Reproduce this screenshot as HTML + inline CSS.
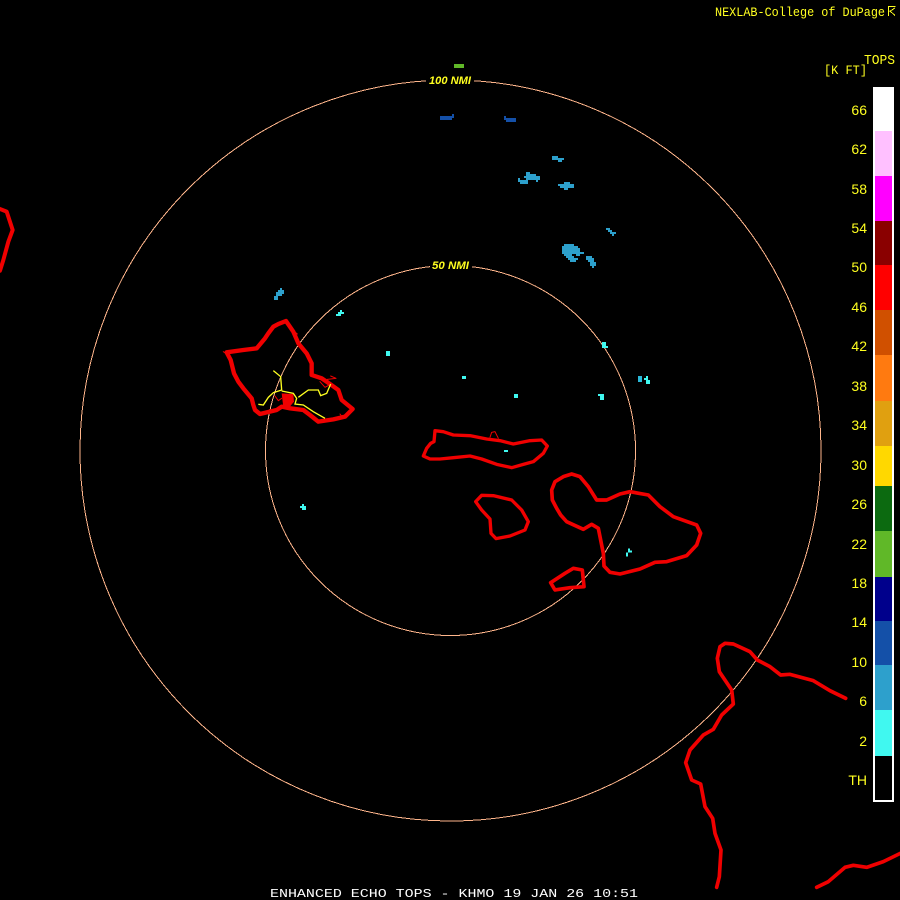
<!DOCTYPE html>
<html>
<head>
<meta charset="utf-8">
<style>
html,body{margin:0;padding:0;background:#000;width:900px;height:900px;overflow:hidden}
svg{display:block}
text{font-family:"Liberation Mono","DejaVu Sans Mono",monospace}
.lab text{font-family:"Liberation Sans",sans-serif;font-size:14px;fill:#ffff20}
.coast{fill:none;stroke:#f00000;stroke-linejoin:round;stroke-linecap:round}
</style>
</head>
<body>
<svg width="900" height="900" viewBox="0 0 900 900" xmlns="http://www.w3.org/2000/svg">
<rect width="900" height="900" fill="#000"/>

<!-- range rings -->
<g fill="none" stroke="#ffb68c" stroke-width="1" shape-rendering="crispEdges">
<circle cx="450.5" cy="450.5" r="370.5"/>
<circle cx="450.5" cy="450.5" r="185"/>
</g>
<rect x="426" y="74" width="48" height="13" fill="#000"/>
<rect x="430" y="259" width="42" height="13" fill="#000"/>
<text x="429" y="84" font-size="11" font-weight="bold" font-style="italic" fill="#ffff20" textLength="42" lengthAdjust="spacingAndGlyphs" style="font-family:'Liberation Sans',sans-serif">100 NMI</text>
<text x="432" y="269" font-size="11" font-weight="bold" font-style="italic" fill="#ffff20" textLength="37" lengthAdjust="spacingAndGlyphs" style="font-family:'Liberation Sans',sans-serif">50 NMI</text>

<!-- echoes -->
<g shape-rendering="crispEdges">
<rect x="454" y="64" width="10" height="4" fill="#60b828"/>
<g transform="translate(430 50) scale(.33333)" fill="#1450a8">
<path d="M30 198h36v-6h6v12h-6v6h-36z"/>
<path d="M222 198h6v6h30v12h-30v-6h-6z"/>
</g>
<g transform="translate(430 50) scale(.33333)" fill="#2da0cc">
<path d="M366 318h18v6h18v6h-6v6h-12v-6h-18z"/>
<path d="M288 366h12v6h18v6h12v12h-6v6h-6v-6h-24v12h-24v-6h-6v-12h6v6h18v-6h-6v-6h6z"/>
<path d="M402 396h18v6h12v12h-18v6h-12v-6h-12v-6h-6v-6h18z"/>
</g>
<g transform="translate(550 220) scale(.33333)" fill="#2da0cc">
<path d="M168 24h12v6h6v6h12v6h-6v6h-6v-6h-6v-6h-6v-6h-6z"/>
<path d="M60 72h12v6h12v6h6v12h12v6h-12v6h-6v12h-6v6h-18v-6h-6v-6h-6v-6h-6v-6h-6v-24h6v-6h6z M66 102v6h6v6h12v-6h-6v-6z" fill-rule="evenodd"/>
<path d="M108 108h18v6h6v12h6v12h-6v6h-6v-6h-6v-12h-6v-6h-6z"/>
</g>
<g transform="translate(550 220) scale(.33333)" fill="#40f8f0">
<path d="M156 366h12v12h6v6h-18z"/>
<path d="M144 522h18v18h-12v-12h-6z"/>
<path d="M288 468h6v12h6v12h-12v-12h-6v-6h6z"/>
</g>
<rect x="638" y="376" width="4" height="6" fill="#2ab8d8"/>
<g transform="translate(255 280) scale(.33333)" fill="#2da0cc">
<path d="M75 24h6v6h6v12h-6v6h-12v12h-12v-12h6v-12h6v-6h6z"/>
</g>
<g transform="translate(255 280) scale(.33333)" fill="#40f8f0">
<path d="M255 90h6v6h6v6h-9v6h-15v-6h6v-6h6z"/>
</g>
<g fill="#40f8f0">
<rect x="386" y="351" width="4" height="5"/>
<rect x="462" y="376" width="4" height="3"/>
<rect x="514" y="394" width="4" height="4"/>
<rect x="504" y="450" width="4" height="2"/>
<path d="M302 504h2v2h2v4h-4v-2h-2v-2h2z"/>
</g>
<g transform="translate(540 465) scale(.33333)" fill="#40f8f0">
<path d="M264 250h6v6h6v6h-12v12h-6v-12h6z"/>
</g>
</g>

<!-- Oahu -->
<g transform="translate(210 310) scale(.33333)">
<path class="coast" stroke-width="13" d="M228 33L205 42L190 50L175 70L165 85L140 115L100 120L50 127L62 150L72 190L85 215L100 235L125 265L130 285L135 300L150 312L200 300L215 290L240 295L280 300L300 315L325 335L370 328L405 320L428 297L395 270L385 240L360 222L335 205L305 195L305 160L290 130L265 100L250 65Z"/>
<path d="M215 250L250 252L252 275L238 292L220 292Z" fill="#f00000"/>
<path class="coast" stroke-width="3" d="M330 215L345 232L358 225L352 208L378 205L362 198M195 258L205 272L215 265M40 125L50 132M250 62L262 72M390 312L400 325"/>
<g fill="none" stroke="#ffff20" stroke-width="4">
<path d="M190 182L212 200L215 240L190 248L175 262L160 285L145 283"/>
<path d="M215 243L250 250L260 265L255 282L280 285L310 305L345 325"/>
<path d="M265 262L295 240L325 240L332 257L350 250L362 222"/>
</g>
</g>

<!-- Molokai, Lanai -->
<g transform="translate(410 420) scale(.33333)">
<path class="coast" stroke-width="10" d="M75 32L100 35L130 45L180 47L230 57L270 62L310 72L360 62L395 60L412 78L400 100L370 125L340 133L305 143L260 133L215 117L180 108L130 113L90 117L60 117L40 108L50 85L62 70L72 65Z"/>
<path class="coast" stroke-width="3" d="M240 52L245 37L255 35L265 55"/>
<path class="coast" stroke-width="10" d="M215 226L250 227L305 240L335 270L355 305L345 330L300 348L258 356L243 340L240 297L215 270L197 245Z"/>
</g>

<!-- Maui, Kahoolawe -->
<g transform="translate(540 465) scale(.33333)">
<path class="coast" stroke-width="11" d="M95 27L120 35L145 65L170 105L200 105L240 87L270 80L325 90L360 125L400 155L470 180L482 205L470 240L440 272L380 290L345 292L300 312L240 327L210 322L192 303L190 265L175 190L155 178L130 193L80 170L62 150L50 130L37 105L35 75L45 50L70 35Z"/>
<path class="coast" stroke-width="11" d="M100 310L127 315L132 365L90 368L45 375L32 353L75 325Z"/>
</g>

<!-- Big Island -->
<g transform="translate(670 630) scale(.33333)">
<path class="coast" stroke-width="11" d="M527 205L480 182L430 152L360 133L332 135L300 110L262 90L240 65L190 42L165 40L150 50L142 85L148 125L185 180L190 222L155 255L130 298L100 315L60 360L47 398L65 450L92 462L105 530L128 565L135 610L153 660L148 740L140 772"/>
<path class="coast" stroke-width="11" d="M440 772L475 755L525 712L550 706L590 712L640 695L695 668"/>
</g>

<!-- Kauai edge -->
<g transform="translate(0 200) scale(.33333)">
<path class="coast" stroke-width="12" d="M-5 25L20 35L38 90L25 125L10 180L0 212"/>
</g>

<!-- color bar -->
<g shape-rendering="crispEdges">
<rect x="873" y="87" width="21" height="715" fill="#fff"/>
<rect x="875" y="89" width="17" height="711" fill="#000"/>
<rect x="875" y="89" width="17" height="42" fill="#fff"/>
<rect x="875" y="131" width="17" height="45" fill="#ffc0ff"/>
<rect x="875" y="176" width="17" height="45" fill="#ff00ff"/>
<rect x="875" y="221" width="17" height="44" fill="#8a0000"/>
<rect x="875" y="265" width="17" height="45" fill="#ff0000"/>
<rect x="875" y="310" width="17" height="45" fill="#d05000"/>
<rect x="875" y="355" width="17" height="46" fill="#ff7a10"/>
<rect x="875" y="401" width="17" height="45" fill="#e0a010"/>
<rect x="875" y="446" width="17" height="40" fill="#ffd800"/>
<rect x="875" y="486" width="17" height="45" fill="#0c6a10"/>
<rect x="875" y="531" width="17" height="46" fill="#60b828"/>
<rect x="875" y="577" width="17" height="44" fill="#00008c"/>
<rect x="875" y="621" width="17" height="44" fill="#1450a8"/>
<rect x="875" y="665" width="17" height="45" fill="#2da0cc"/>
<rect x="875" y="710" width="17" height="46" fill="#40f8f0"/>
</g>

<!-- scale labels -->
<g class="lab" text-anchor="end">
<text x="867" y="115">66</text>
<text x="867" y="154">62</text>
<text x="867" y="194">58</text>
<text x="867" y="233">54</text>
<text x="867" y="272">50</text>
<text x="867" y="312">46</text>
<text x="867" y="351">42</text>
<text x="867" y="391">38</text>
<text x="867" y="430">34</text>
<text x="867" y="470">30</text>
<text x="867" y="509">26</text>
<text x="867" y="549">22</text>
<text x="867" y="588">18</text>
<text x="867" y="627">14</text>
<text x="867" y="667">10</text>
<text x="867" y="706">6</text>
<text x="867" y="746">2</text>
<text x="867" y="785">TH</text>
</g>
<text x="864" y="64" font-size="14" fill="#ffff20" textLength="31" lengthAdjust="spacingAndGlyphs">TOPS</text>
<text x="824" y="74" font-size="13" fill="#ffff20" textLength="43" lengthAdjust="spacingAndGlyphs">[K FT]</text>
<text x="715" y="16" font-size="13" fill="#ffff20" textLength="170" lengthAdjust="spacingAndGlyphs">NEXLAB-College of DuPage</text>
<g fill="none" stroke="#ffff20" stroke-width="1" shape-rendering="crispEdges">
<path d="M888.5 16V6.5H895.5M889.5 11.5L895 8M890 11L895 15.5"/>
</g>

<text x="270" y="897" font-size="12" fill="#fff" textLength="368" lengthAdjust="spacingAndGlyphs">ENHANCED ECHO TOPS - KHMO 19 JAN 26 10:51</text>
</svg>
</body>
</html>
